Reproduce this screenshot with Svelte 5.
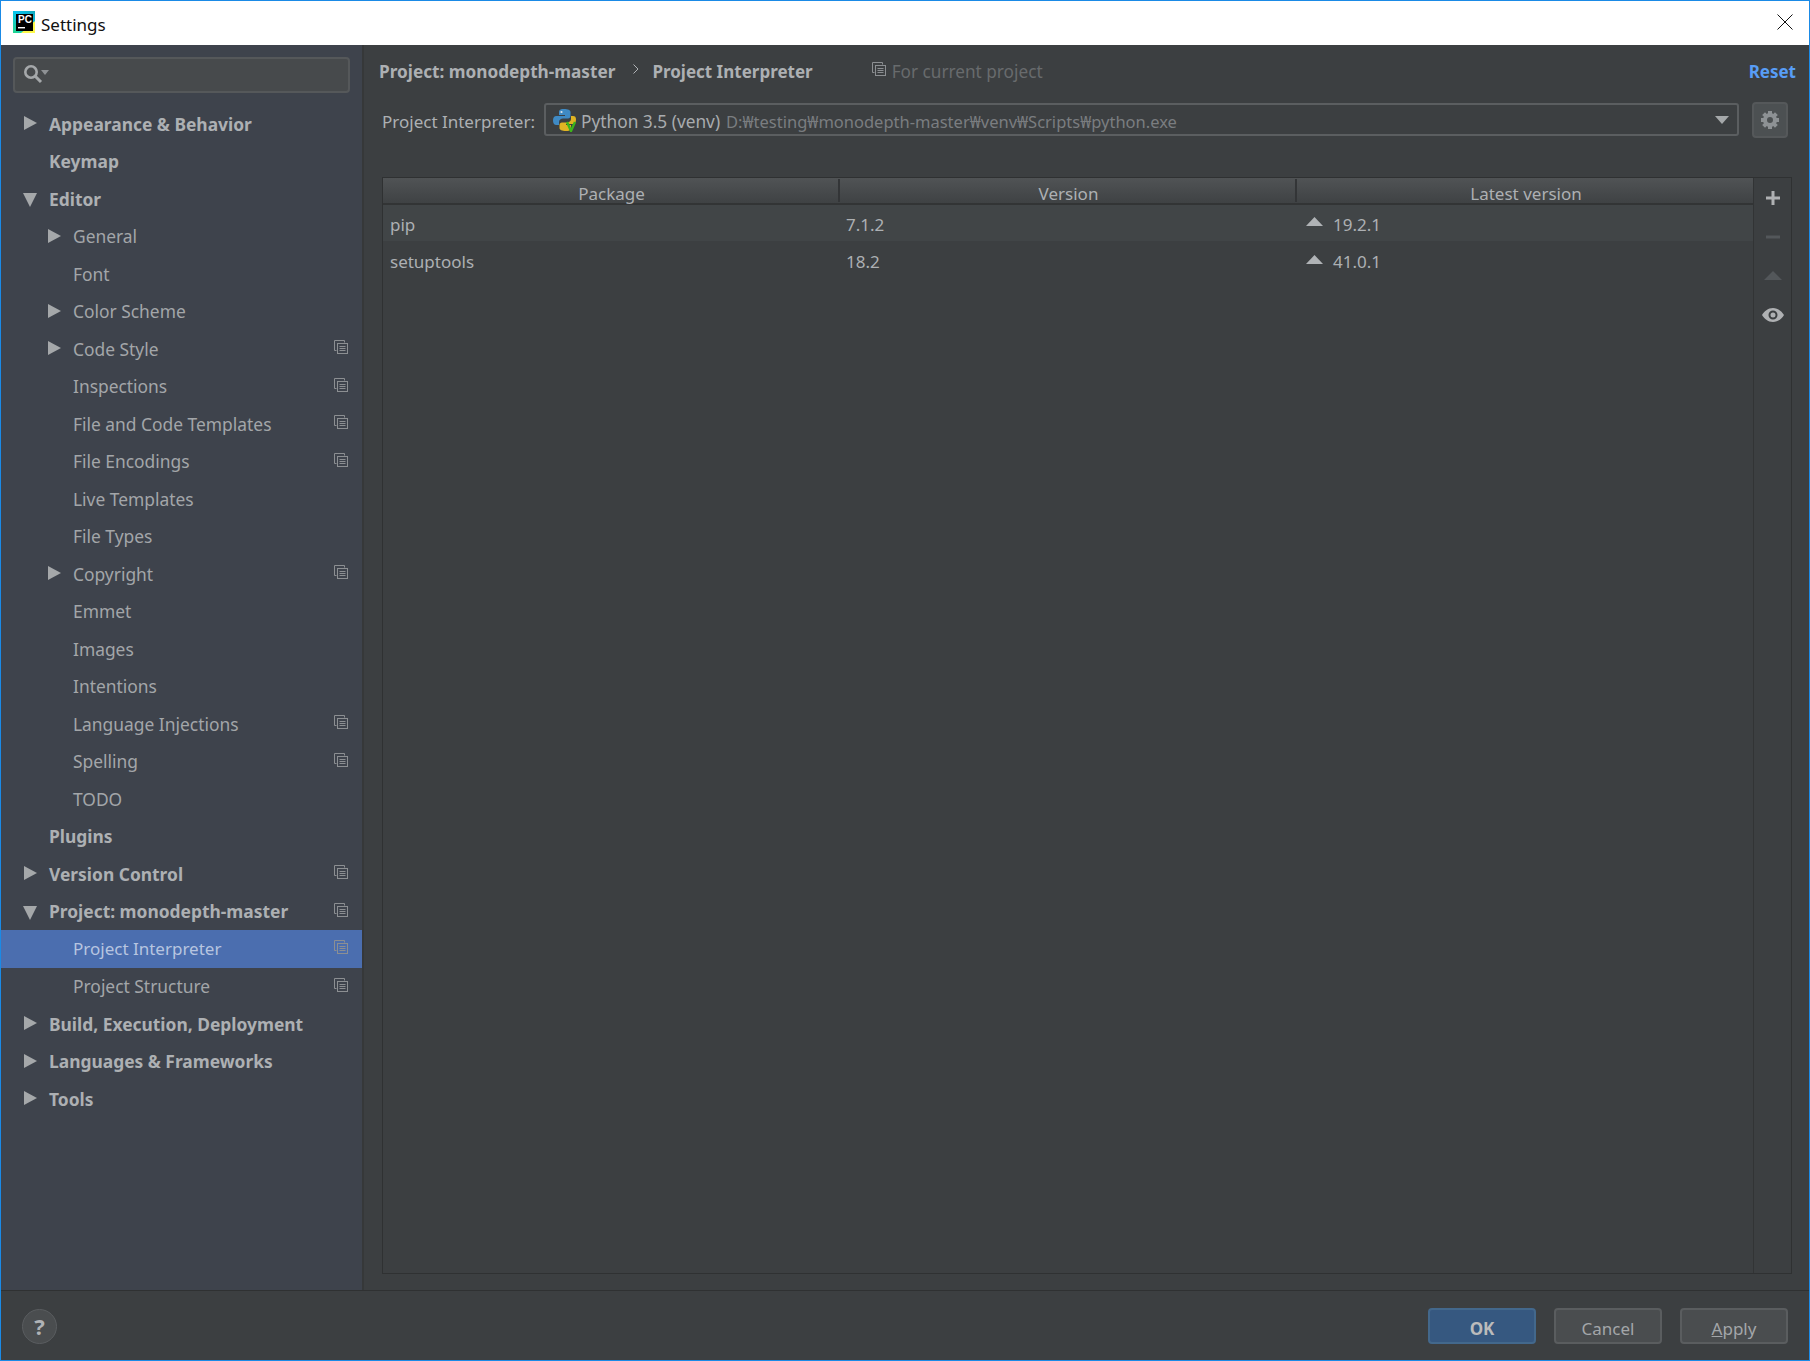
<script>
  const items = [
    { t: 'Appearance & Behavior', b: 1, a: 'r' },
    { t: 'Keymap', b: 1 },
    { t: 'Editor', b: 1, a: 'd' },
    { t: 'General', a: 'r' },
    { t: 'Font' },
    { t: 'Color Scheme', a: 'r' },
    { t: 'Code Style', a: 'r', c: 1 },
    { t: 'Inspections', c: 1 },
    { t: 'File and Code Templates', c: 1 },
    { t: 'File Encodings', c: 1 },
    { t: 'Live Templates' },
    { t: 'File Types' },
    { t: 'Copyright', a: 'r', c: 1 },
    { t: 'Emmet' },
    { t: 'Images' },
    { t: 'Intentions' },
    { t: 'Language Injections', c: 1 },
    { t: 'Spelling', c: 1 },
    { t: 'TODO' },
    { t: 'Plugins', b: 1 },
    { t: 'Version Control', b: 1, a: 'r', c: 1 },
    { t: 'Project: monodepth-master', b: 1, a: 'd', c: 1 },
    { t: 'Project Interpreter', c: 1, s: 1 },
    { t: 'Project Structure', c: 1 },
    { t: 'Build, Execution, Deployment', b: 1, a: 'r' },
    { t: 'Languages & Frameworks', b: 1, a: 'r' },
    { t: 'Tools', b: 1, a: 'r' }
  ];
  const pkgs = [
    { n: 'pip', v: '7.1.2', l: '19.2.1' },
    { n: 'setuptools', v: '18.2', l: '41.0.1' }
  ];
</script>

{#snippet copy(cls)}
  <svg class={cls} width="14" height="14" viewBox="0 0 14 14" fill="none" stroke="#8c8f92" stroke-width="1">
    <path d="M2.5 10.5h-2v-10h10v2" />
    <rect x="3.5" y="3.5" width="10" height="10" />
    <path d="M5.5 6.5h6M5.5 8.5h6M5.5 10.5h6" />
  </svg>
{/snippet}

<div class="win">
  <header class="title">
    <svg class="logo" width="22" height="22" viewBox="0 0 22 22">
      <defs>
        <linearGradient id="lg" x1="0" y1="1" x2="1" y2="0">
          <stop offset="0" stop-color="#21d789" />
          <stop offset="0.55" stop-color="#07c3f2" />
          <stop offset="1" stop-color="#12a7b8" />
        </linearGradient>
      </defs>
      <rect width="22" height="22" fill="url(#lg)" />
      <path d="M22 10V22H8Z" fill="#fcf84a" />
      <rect x="3" y="3" width="17" height="17" fill="#000" />
      <text x="5" y="12" class="pc">PC</text>
      <rect x="5" y="16" width="7" height="1.4" fill="#fff" />
    </svg>
    <span class="ttl">Settings</span>
    <svg class="close" width="16" height="16" viewBox="0 0 16 16" stroke="#111" stroke-width="1"><path d="M0.5 0.5L15.5 15.5M15.5 0.5L0.5 15.5" /></svg>
  </header>

  <div class="body">
    <aside class="side">
      <div class="search">
        <svg width="28" height="22" viewBox="0 0 28 22" fill="none">
          <circle cx="8" cy="8" r="5.700" stroke="#a5a8aa" stroke-width="2.600" />
          <path d="M12 12L18 18" stroke="#a5a8aa" stroke-width="3" />
          <path d="M18 6h8l-4 5z" fill="#8e9194" />
        </svg>
      </div>
      <nav class="tree">
        {#each items as it}
          <div class="row" class:sel={it.s} class:bold={it.b} class:child={!it.b}>
            {#if it.a === 'r'}
              <span class="arr right"></span>
            {:else if it.a === 'd'}
              <span class="arr down"></span>
            {/if}
            <span class="lbl">{it.t}</span>
            {#if it.c}{@render copy('rowcopy')}{/if}
          </div>
        {/each}
      </nav>
    </aside>

    <main class="main">
      <div class="crumbs">
        <span class="cb">Project: monodepth-master</span>
        <svg class="sep" width="6" height="10" viewBox="0 0 6 10" fill="none" stroke="#b0b3b6" stroke-width="1"><path d="M0.5 0.5L5 5L0.5 9.5" /></svg>
        <span class="cb second">Project Interpreter</span>
        {@render copy('crumbcopy')}
        <span class="cur">For current project</span>
        <span class="reset">Reset</span>
      </div>

      <div class="interp">
        <span class="il">Project Interpreter:</span>
        <div class="combo">
          <svg class="py" width="24" height="24" viewBox="0 0 24 24">
            <path d="M11 1C6 1 6 3 6 5v2h6v1H3.500C1 8 0 10 0 12.500S1 17 3.500 17H6v-3c0-2 2-3.500 4-3.500h5c1.500 0 2.500-1 2.500-2.500V4c0-2-2.500-3-6.500-3z" fill="#3f8ac4" />
            <circle cx="8.500" cy="4" r="1.100" fill="#dfe6ea" />
            <path d="M18 8v3c0 2-2 3.500-4 3.500H9c-1.500 0-2.500 1-2.500 2.500v3c0 2 2.500 3 6.500 3 5 0 5-2 5-4v-2h-5v-1h7c2 0 3-2 3-4.500S22 8 20 8z" fill="#e0b423" />
            <path d="M14 14l4 9 4-9" fill="none" stroke="#3db51a" stroke-width="2.400" />
          </svg>
          <span class="pn">Python 3.5 (venv)</span>
          <span class="pp">D:₩testing₩monodepth-master₩venv₩Scripts₩python.exe</span>
          <svg class="caret" width="14" height="8" viewBox="0 0 14 8"><path d="M0 0h14L7 8z" fill="#a5a8aa" /></svg>
        </div>
        <button class="gear" aria-label="Settings">
          <svg width="20" height="20" viewBox="0 0 20 20">
            <circle cx="10" cy="10" r="5" fill="none" stroke="#8d9194" stroke-width="4" />
            <path stroke="#8d9194" stroke-width="4" d="M10 1v4M10 15v4M1 10h4M15 10h4M3.600 3.600l3 3M13.400 13.400l3 3M16.400 3.600l-3 3M6.600 13.400l-3 3" />
          </svg>
        </button>
      </div>

      <section class="pane">
        <div class="table">
          <div class="thead">
            <div class="th">Package</div>
            <div class="th">Version</div>
            <div class="th">Latest version</div>
          </div>
          {#each pkgs as p, i}
            <div class="tr" class:odd={i === 0}>
              <div class="td n">{p.n}</div>
              <div class="td v">{p.v}</div>
              <div class="td l">
                <svg width="17" height="9" viewBox="0 0 17 9"><path d="M8.500 0L17 9H0z" fill="#b0b3b6" /></svg>
                {p.l}
              </div>
            </div>
          {/each}
        </div>
        <div class="tools">
          <svg width="16" height="16" viewBox="0 0 16 16"><path d="M6.500 1h3v5.500H15v3H9.500V15h-3V9.500H1v-3h5.500z" fill="#afb1b3" /></svg>
          <svg width="16" height="16" viewBox="0 0 16 16"><rect x="1" y="6.500" width="14" height="3" fill="#53575a" /></svg>
          <svg width="18" height="16" viewBox="0 0 18 16"><path d="M9 3l9 9H0z" fill="#53575a" /></svg>
          <svg width="22" height="16" viewBox="0 0 22 16"><path fill="#afb1b3" fill-rule="evenodd" d="M11 1c5 0 9 3.500 11 7-2 3.500-6 7-11 7S2 11.500 0 8c2-3.500 6-7 11-7zm0 2.500a4.500 4.500 0 1 0 0 9 4.500 4.500 0 0 0 0-9zm0 2a2.500 2.500 0 1 1 0 5 2.500 2.500 0 0 1 0-5z" /></svg>
        </div>
      </section>
    </main>
  </div>

  <footer class="foot">
    <button class="help">?</button>
    <div class="btns">
      <button class="btn ok">OK</button>
      <button class="btn">Cancel</button>
      <button class="btn"><u>A</u>pply</button>
    </div>
  </footer>
</div>

<style>
  :global(body) { margin: 0; background: #3c3f41; }
  .win {
    width: 1810px; height: 1361px; box-sizing: border-box;
    border: 1px solid #1a8ae6; display: flex; flex-direction: column;
    font-family: "Noto Sans", "Noto Sans CJK KR", sans-serif; font-size: 17px; color: #adb0b3;
    background: #3c3f41; overflow: hidden;
  }
  .title {
    height: 44px; background: #fff; display: flex; align-items: center; flex: none;
    padding-left: 12px; color: #111; position: relative;
  }
  .logo { flex: none; margin-top: -2px; }
  .pc { font: bold 10px "Liberation Sans", sans-serif; fill: #fff; }
  .ttl { margin-left: 6px; font-size: 17px; padding-top: 2px; }
  .close { margin-left: auto; margin-right: 16px; margin-top: -3px; }
  .body { flex: 1; display: flex; min-height: 0; }
  .side {
    width: 361px; flex: none; background: #3e434c; border-right: 2px solid #363839;
    padding-top: 12px; box-sizing: content-box; display: flex; flex-direction: column;
  }
  .search {
    margin-left: 12px; width: 337px; height: 36px; box-sizing: border-box;
    border: 2px solid #55585a; border-radius: 4px; background: #474a4c;
    padding: 5px 0 0 8px; display: flex; align-items: flex-start;
  }
  .tree { margin-top: 12px; }
  .row {
    height: 37.5px; display: flex; align-items: center; position: relative;
    padding-left: 48px; padding-top: 0.4px; box-sizing: border-box; white-space: nowrap;
  }
  .row.child { padding-left: 72px; color: #a3a6a9; font-size: 17.4px; }
  .row.bold { font-weight: 700; color: #adb0b3; font-size: 17.4px; }
  .row.sel { background: #4b6eaf; color: #b7c5e0; font-size: 17px; }
  .arr { position: absolute; top: 11px; width: 0; height: 0; }
  .bold .arr { left: 23px; }
  .child .arr { left: 47px; }
  .arr.right { border-left: 13px solid #a5a8aa; border-top: 7px solid transparent; border-bottom: 7px solid transparent; }
  .arr.down { left: 22px; top: 13px; border-top: 14px solid #a5a8aa; border-left: 7px solid transparent; border-right: 7px solid transparent; }
  :global(.rowcopy) { position: absolute; left: 333px; top: 10px; }
  .main { flex: 1; min-width: 0; display: flex; flex-direction: column; padding-left: 15px; padding-right: 17px; box-sizing: border-box; }
  .crumbs { height: 52px; display: flex; align-items: center; flex: none; margin-right: -4px; }
  .cb { font-weight: 700; font-size: 17.2px; color: #adb0b3; }
  .cb.second { font-size: 17px; }
  .sep { margin: -4px 13px 0 18px; }
  :global(.crumbcopy) { margin-left: 59px; margin-right: 6px; margin-top: -4px; }
  .cur { color: #686b6d; font-size: 17.2px; }
  .reset { margin-left: auto; color: #589df6; font-weight: 700; font-size: 17px; }
  .interp { display: flex; align-items: center; height: 47px; flex: none; padding-left: 3px; }
  .il { width: 162px; flex: none; padding-top: 1px; font-size: 17px; }
  .combo {
    width: 1195px; height: 33px; box-sizing: border-box; border: 2px solid #5b5e60; border-radius: 3px;
    display: flex; align-items: center; padding-left: 7px; flex: none; background: #3c3f41; margin-top: -2px;
  }
  .py { flex: none; margin-right: 4px; }
  .pn { color: #a9acaf; font-size: 17.3px; padding-top: 3px; }
  .pp { margin-left: 6px; font-size: 16.5px; color: #7a7d80; padding-top: 3px; }
  .caret { margin-left: auto; margin-right: 8px; }
  .gear {
    margin-left: 13px; width: 36px; height: 36px; border: 2px solid #55585a; border-radius: 4px;
    background: #4c5052; padding: 0; display: flex; align-items: center; justify-content: center; margin-top: -2px;
  }
  .pane {
    flex: 1; min-height: 0; margin: 33px 0 16px 3px; border: 1px solid #2f3132; display: flex; background: #3c3f41;
  }
  .table { flex: 1; min-width: 0; }
  .thead {
    height: 25px; display: grid; grid-template-columns: 457px 457px 456px;
    background: linear-gradient(#505355, #3f4244); border-bottom: 2px solid #323435;
  }
  .th { text-align: center; line-height: 30px; height: 23px; border-right: 2px solid #333537; margin-top: 1px; font-size: 17px; padding-left: 2px; box-sizing: border-box; }
  .th:last-child { border-right: 0; }
  .tr { height: 37px; display: grid; grid-template-columns: 457px 457px 1fr; align-items: center; padding-top: 4px; box-sizing: border-box; }
  .tr.odd { background: #414547; height: 36px; padding-top: 2px; }
  .td { padding-left: 7px; }
  .td.v { padding-left: 6px; }
  .td.l { display: flex; align-items: center; gap: 10px; padding-left: 9px; }
  .td.l svg { margin-top: -5px; }
  .tools {
    width: 38px; flex: none; border-left: 1px solid #323435; display: flex; flex-direction: column;
    align-items: center; gap: 23px; padding-top: 12px; box-sizing: border-box;
  }
  .foot {
    height: 70px; flex: none; border-top: 1px solid #2f3132; display: flex; align-items: center;
    padding: 0 21px 0 21px; box-sizing: border-box; justify-content: space-between;
  }
  button { font: inherit; color: inherit; }
  .help {
    width: 35px; height: 35px; border-radius: 50%; border: 1px solid #5a5d60; background: #4a4d4f;
    padding: 0; font-weight: 700; font-size: 22px; color: #b0b3b6; margin-top: 1px;
  }
  .btns { display: flex; gap: 18px; margin-top: 1px; }
  .btn {
    width: 108px; height: 36px; box-sizing: border-box; border: 2px solid #5a5d5f; border-radius: 4px;
    background: #4a4d4f; color: #a3a6a9; padding: 4px 0 0 0;
  }
  .btn.ok { background: #365880; border-color: #43688c; font-weight: 700; color: #bbbbbb; }
</style>
